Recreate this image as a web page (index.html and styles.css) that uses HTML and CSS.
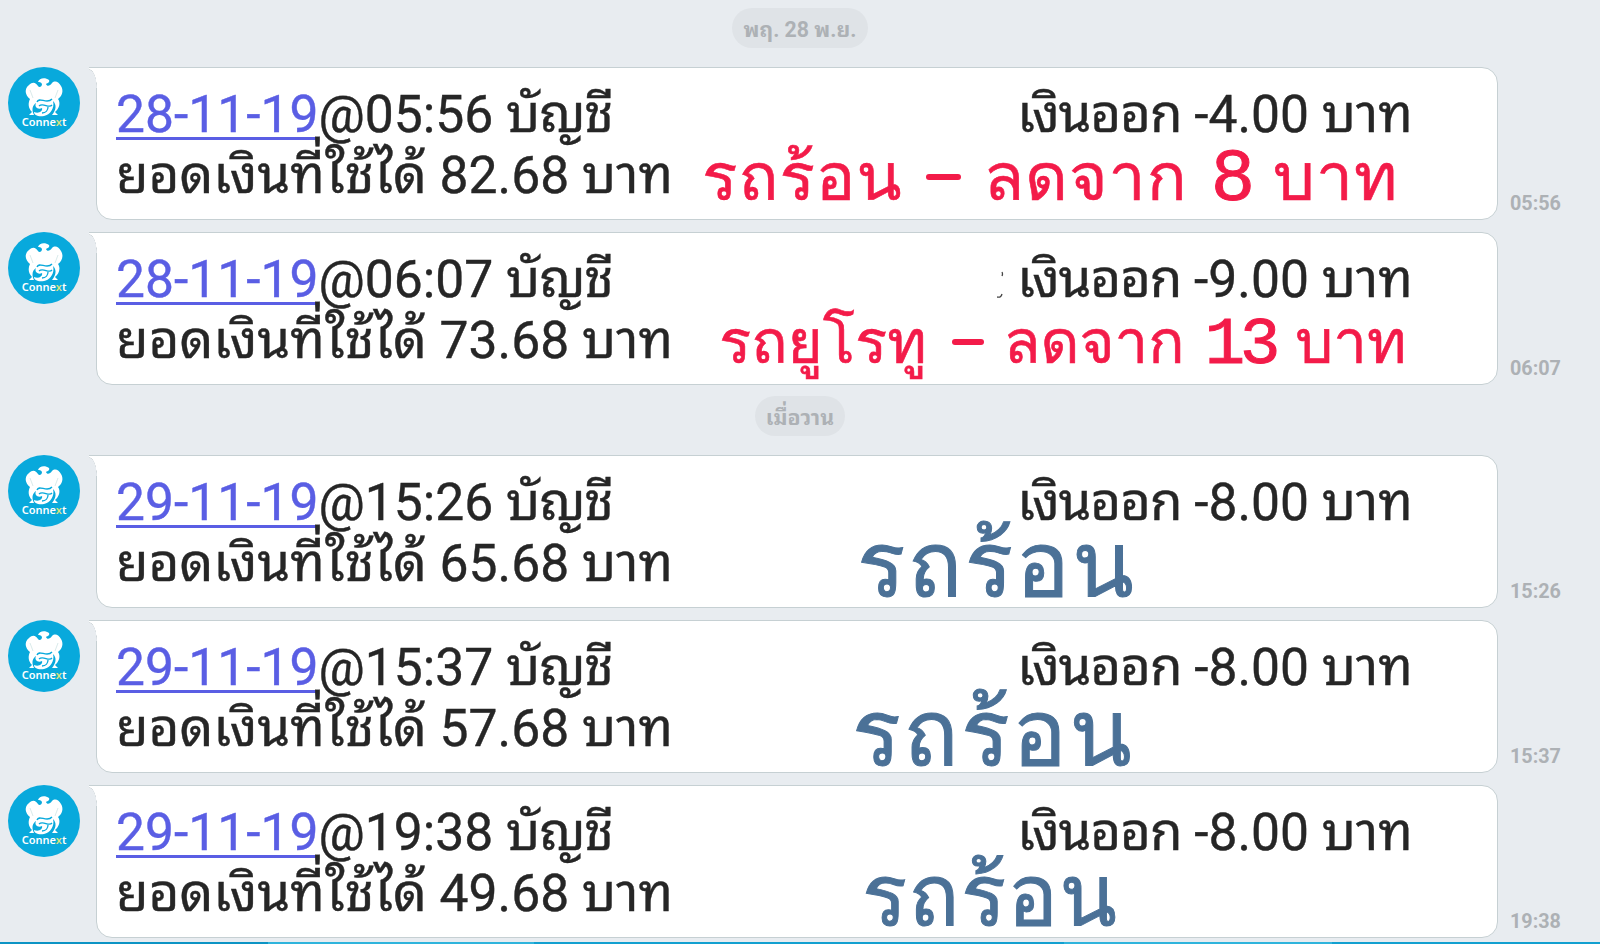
FILE: index.html
```
<!DOCTYPE html>
<html lang="th">
<head>
  <meta charset="UTF-8" />
  <meta name="viewport" content="width=device-width, initial-scale=1.0"/>
  <title>Connext</title>
  <link rel="stylesheet" href="styles.css">
</head>
<body>

<!-- shared avatar -->
<svg class="defs" aria-hidden="true">
  <symbol id="bird" viewBox="0 0 72 72">
    <circle cx="36" cy="36" r="36" fill="#08a9dc"/>
    <path fill="#fff" d="M30 15 C31 11 37 10 41 13 C42 15 40 16 38 17 C39 20 42 19 44 16 C47 13 51 15 53 19 C56 24 54 29 50 32 C53 36 51 42 47 45 L50 48 L44 48 C48 43 49 38 45 34 C47 41 42 48 36 49 C30 50 26 48 26 45 C31 47 35 44 34 41 C30 43 26 40 28 36 C25 38 23 42 26 48 L21 48 L24 45 C20 41 20 36 22 32 C17 28 16 22 21 18 C25 14 28 16 30 19 C31 21 34 20 34 17 C33 15 31 15 30 15 Z"/>
    <path fill="none" stroke="#08a9dc" stroke-width="1.3" d="M29 35 C31 29 39 38 44 32 M31 39 C35 35 41 42 44 38 M34 46 C38 46 40 43 40 40"/>
    <path fill="none" stroke="#cfe4e4" stroke-width=".8" d="M22 23 L25 31 M50 23 L47 31"/>
  </symbol>
</svg>

<main class="chat">
  <div class="date">พฤ. 28 พ.ย.</div>

  <div class="message">
    <div class="avatar"><svg><use href="#bird"/></svg><span>Conne<i>x</i>t</span></div>
    <div class="bubble">
      <div class="line"><span class="account"><a href="#">28-11-19</a>@05:56 <span class="th tight">บัญชี</span></span><span class="amount"><span class="th tight">เงินออก</span> -4.00 <span class="th">บาท</span></span></div>
      <div class="line"><span class="balance"><span class="th">ยอดเงินที่ใช้ได้</span> 82.68 <span class="th">บาท</span></span></div>
      <div class="note red note-1"><span>รถร้อน</span><b></b><span>ลดจาก</span><em>8</em><span>บาท</span></div>
    </div>
    <time>05:56</time>
  </div>

  <div class="message">
    <div class="avatar"><svg><use href="#bird"/></svg><span>Conne<i>x</i>t</span></div>
    <div class="bubble">
      <div class="line"><span class="account"><a href="#">28-11-19</a>@06:07 <span class="th tight">บัญชี</span></span><svg class="smudge" viewBox="0 0 8 32"><path d="M5 4 q1 2 0 4 M0 29 q4 1 5-3" fill="none" stroke="#444" stroke-width="1.3"/></svg><span class="amount"><span class="th tight">เงินออก</span> -9.00 <span class="th">บาท</span></span></div>
      <div class="line"><span class="balance"><span class="th">ยอดเงินที่ใช้ได้</span> 73.68 <span class="th">บาท</span></span></div>
      <div class="note red note-2"><span>รถยูโรทู</span><b></b><span>ลดจาก</span><em>13</em><span>บาท</span></div>
    </div>
    <time>06:07</time>
  </div>

  <div class="date yesterday">เมื่อวาน</div>

  <div class="message">
    <div class="avatar"><svg><use href="#bird"/></svg><span>Conne<i>x</i>t</span></div>
    <div class="bubble">
      <div class="line"><span class="account"><a href="#">29-11-19</a>@15:26 <span class="th tight">บัญชี</span></span><span class="amount"><span class="th tight">เงินออก</span> -8.00 <span class="th">บาท</span></span></div>
      <div class="line"><span class="balance"><span class="th">ยอดเงินที่ใช้ได้</span> 65.68 <span class="th">บาท</span></span></div>
      <div class="note blue note-3">รถร้อน</div>
    </div>
    <time>15:26</time>
  </div>

  <div class="message">
    <div class="avatar"><svg><use href="#bird"/></svg><span>Conne<i>x</i>t</span></div>
    <div class="bubble">
      <div class="line"><span class="account"><a href="#">29-11-19</a>@15:37 <span class="th tight">บัญชี</span></span><span class="amount"><span class="th tight">เงินออก</span> -8.00 <span class="th">บาท</span></span></div>
      <div class="line"><span class="balance"><span class="th">ยอดเงินที่ใช้ได้</span> 57.68 <span class="th">บาท</span></span></div>
      <div class="note blue note-4">รถร้อน</div>
    </div>
    <time>15:37</time>
  </div>

  <div class="message">
    <div class="avatar"><svg><use href="#bird"/></svg><span>Conne<i>x</i>t</span></div>
    <div class="bubble">
      <div class="line"><span class="account"><a href="#">29-11-19</a>@19:38 <span class="th tight">บัญชี</span></span><span class="amount"><span class="th tight">เงินออก</span> -8.00 <span class="th">บาท</span></span></div>
      <div class="line"><span class="balance"><span class="th">ยอดเงินที่ใช้ได้</span> 49.68 <span class="th">บาท</span></span></div>
      <div class="note blue note-5">รถร้อน</div>
    </div>
    <time>19:38</time>
  </div>
</main>

<footer></footer>

</body>
</html>
```
FILE: styles.css
```
* {
  box-sizing: border-box;
}
body {
  margin: 0;
  height: 944px;
  overflow: hidden;
  display: flex;
  flex-direction: column;
  background: #e8ecf0;
  color: #262626;
  font-family: Roboto, "Noto Sans Thai Looped", "Noto Sans Thai", sans-serif;
}
.defs {
  display: none;
}
.chat {
  flex: 1;
  display: flex;
  flex-direction: column;
  gap: 12px;
  padding: 8px 8px 0;
}
.date {
  align-self: center;
  width: 136px;
  height: 40px;
  margin-bottom: 7px;
  border-radius: 20px;
  background: #dfe3e7;
  color: #adb1b5;
  font-size: 21.3px;
  font-weight: bold;
  line-height: 43px;
  text-align: center;
  white-space: nowrap;
}
.date.yesterday {
  width: 90px;
  margin-top: -1px;
  margin-bottom: 7px;
}
.message {
  display: flex;
  height: 153px;
}
.avatar {
  position: relative;
  width: 72px;
  height: 72px;
  margin-right: 16px;
}
.avatar svg {
  display: block;
  width: 72px;
  height: 72px;
}
.avatar span {
  position: absolute;
  left: 0;
  right: 0;
  top: 48px;
  color: #fff;
  font: 600 11px/14px "Noto Sans", sans-serif;
  text-align: center;
}
.avatar i {
  color: #d8e27c;
  font-style: normal;
}
.bubble {
  position: relative;
  width: 1402px;
  height: 153px;
  padding: 16px 84px 0 19px;
  border: 1px solid #c6d0d3;
  border-radius: 0 16px 16px 16px;
  background: #fff;
}
/* speech tail */
.bubble::before {
  content: "";
  position: absolute;
  left: -8px;
  top: -1px;
  width: 10px;
  height: 20px;
  border-top: 1px solid #c6d0d3;
  background: radial-gradient(ellipse 8px 19px at 0 100%, #e8ecf0 93%, #d0d7da 97%, #fff 100%);
}
.line {
  display: flex;
  justify-content: space-between;
  height: 61px;
  font-size: 51.6px;
  line-height: 61px;
  white-space: nowrap;
  -webkit-text-stroke: 0.4px currentColor;
}
.line a {
  color: #5a5ee4;
  text-decoration: underline;
  text-decoration-thickness: 3px;
  text-underline-offset: 5px;
  text-decoration-skip-ink: none;
}
.th {
  font-size: 53px;
  line-height: 1;
}
.tight {
  letter-spacing: -1.2px;
}
.smudge {
  width: 8px;
  height: 32px;
  margin: 19px -373px 0 0;
}
.note {
  position: absolute;
  display: flex;
  align-items: baseline;
  font-family: Loma, "Noto Sans Thai Looped", sans-serif;
  line-height: 80px;
  white-space: nowrap;
}
.note em {
  font-family: "Liberation Mono", monospace;
  font-size: 1.12em;
  font-style: normal;
  letter-spacing: -5px;
  line-height: 1;
  -webkit-text-stroke: 1px currentColor;
}
.note b {
  width: 35px;
  height: 6px;
  border-radius: 3px;
  background: currentColor;
  align-self: center;
}
.red {
  color: #f31b49;
  gap: 25px;
  font-size: 66px;
  -webkit-text-stroke: 0.6px currentColor;
}
.blue {
  color: #4b7197;
  letter-spacing: 2.5px;
  -webkit-text-stroke: 1px currentColor;
}
.note-1 {
  left: 605px;
  top: 69px;
  gap: 23px;
  letter-spacing: 1px;
}
.note-2 {
  left: 622px;
  top: 69px;
  gap: 20px;
  font-size: 60px;
}
.note-2 b {
  margin-left: 5px;
  width: 32px;
}
.note-3 {
  left: 760px;
  top: 69px;
  font-size: 90px;
}
.note-4 {
  left: 755px;
  top: 72px;
  font-size: 91px;
}
.note-5 {
  left: 765px;
  top: 69px;
  font-size: 84px;
  letter-spacing: 1.5px;
}
time {
  align-self: flex-end;
  margin: 0 0 4px 12px;
  color: #adb1b5;
  font-size: 19.8px;
  font-weight: bold;
  line-height: 24px;
}
footer {
  height: 2px;
  background: linear-gradient(90deg, #0c94c4 0 268px, #2fb4dc 268px 534px, #12a0d0 534px 1064px, #2fb4dc 1064px 1332px, #12a0d0 1332px);
}
```
